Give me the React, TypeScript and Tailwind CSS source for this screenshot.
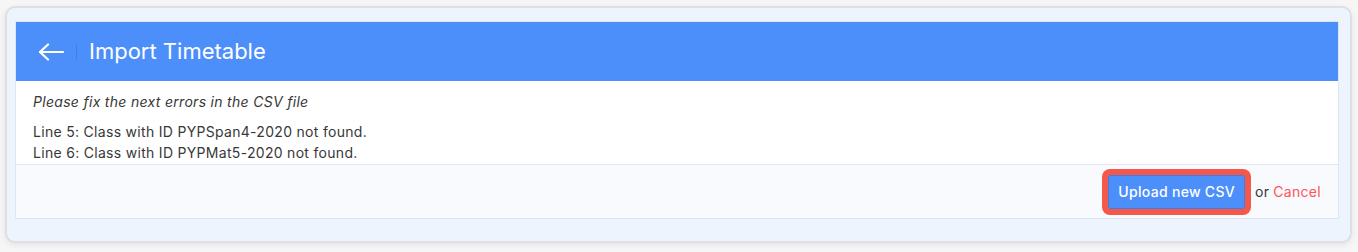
const errors = [
  "Line 5: Class with ID PYPSpan4-2020 not found.",
  "Line 6: Class with ID PYPMat5-2020 not found.",
]

export default function App() {
  return (
    <div className="h-[252px] w-full bg-[#f6f6f6] pt-[6px] pl-[5px] pr-[6px] font-['Inter',sans-serif]">
      <div className="rounded-[10px] border-2 border-[#dddfe3] bg-[#eef4fd] pt-[13px] pb-[22px] pl-[8px] pr-[11px] shadow-[0_2px_6px_rgba(0,0,0,0.08)]">
        <div className="flex flex-col border border-[#dde6f3] bg-white">
          {/* Header */}
          <div className="flex h-[59px] items-center bg-[#4d8ffa] pl-[22px]">
            <svg width="26" height="18" viewBox="0 0 26 18" fill="none" stroke="white" strokeWidth="2.2" strokeLinecap="round" strokeLinejoin="round">
              <path d="M2 9H25" />
              <path d="M10 1.5L2 9L10 16.5" />
            </svg>
            <span className="ml-[12px] h-[16px] w-px bg-[#3e7ee6]" />
            <h1 className="ml-[12px] text-[22px] font-normal text-white">Import Timetable</h1>
          </div>

          {/* Errors */}
          <div className="flex h-[83px] flex-col px-[17px] pt-[12px] text-[14px] tracking-[0.3px] text-[#383838]">
            <p className="italic leading-[17px]">Please fix the next errors in the CSV file</p>
            <div className="mt-[11px] flex flex-col leading-[21px]">
              {errors.map((e) => (
                <p key={e}>{e}</p>
              ))}
            </div>
          </div>

          {/* Footer */}
          <div className="flex h-[54px] items-center justify-end border-t border-[#dde6f3] bg-[#f8fafe] pr-[17px] text-[14px] tracking-[0.3px]">
            <div className="rounded-[8px] bg-[#f4574b] p-[6px]">
              <button className="h-[34px] rounded-[3px] border border-[#3f7de0] bg-[#4d8ffa] px-[9px] font-medium text-white">
                Upload new CSV
              </button>
            </div>
            <span className="ml-[4px] text-[#383838]">or</span>
            <span className="ml-[4px] text-[#ff5555]">Cancel</span>
          </div>
        </div>
      </div>
    </div>
  )
}
